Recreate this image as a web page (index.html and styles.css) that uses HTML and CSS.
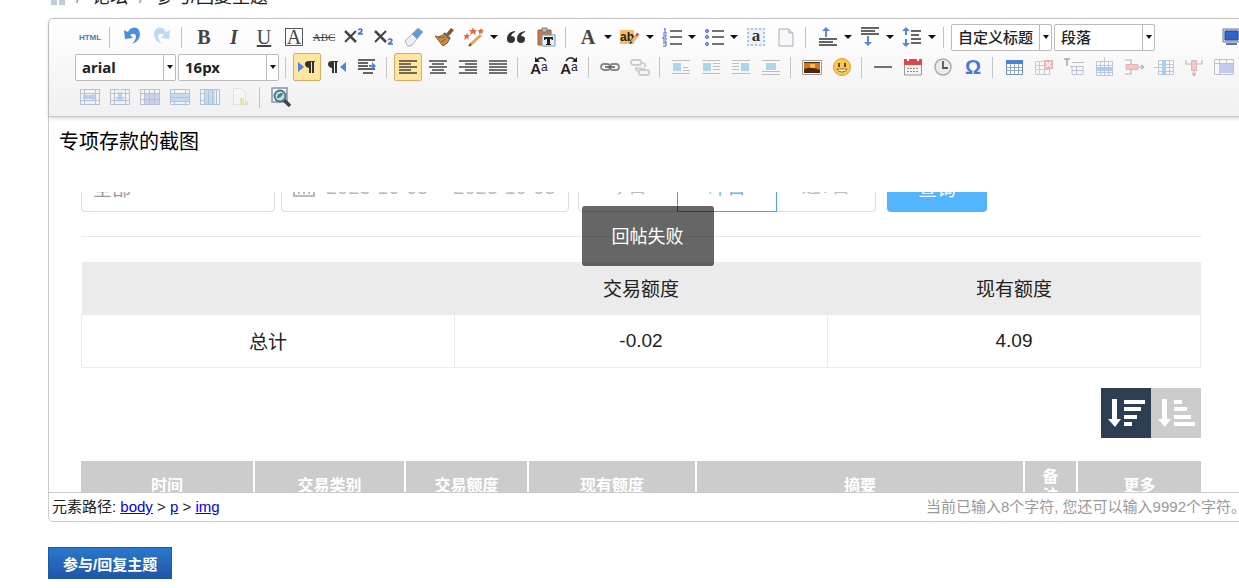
FILE: index.html
```html
<!DOCTYPE html>
<html lang="zh-CN">
<head>
<meta charset="utf-8">
<title>参与/回复主题</title>
<link rel="stylesheet" href="styles.css">
</head>
<body>
<nav class="crumbs">
  <a class="crumb-home" href="#" aria-label="首页"><svg width="14" height="16" viewBox="0 0 14 16"><path fill="#b9cfe0" d="M0 0h6v16H0zM8 0h6v16H8z"/></svg></a>
  <span class="crumb-slash">/</span><a href="#">论坛</a><span class="crumb-slash">/</span><span>参与/回复主题</span>
</nav>
<main class="editor">
  <div class="toolbar">
    <div class="tools">
      <button class="tool" aria-label="HTML"><span class="html-mark">HTML</span></button>
      <i class="sep"></i>
      <button class="tool" aria-label="撤销"><svg viewBox="0 0 20 20"><path fill="#4b8fe0" d="M2 3l1 9 8-1-3-3q5-3 6 1 0 4-4 8 8-3 8-10-1-8-8-6-3 1-4 4z"/></svg></button>
      <button class="tool faded" aria-label="重做"><svg viewBox="0 0 20 20"><path fill="#6fb0e8" d="M18 3l-1 9-8-1 3-3q-5-3-6 1 0 4 4 8-8-3-8-10 1-8 8-6 3 1 4 4z"/></svg></button>
      <i class="sep"></i>
      <button class="tool glyph" aria-label="加粗"><b>B</b></button>
      <button class="tool glyph" aria-label="斜体"><b><em>I</em></b></button>
      <button class="tool glyph" aria-label="下划线"><u>U</u></button>
      <button class="tool glyph" aria-label="字符边框"><span class="boxed">A</span></button>
      <button class="tool glyph" aria-label="删除线"><s class="strike">ABC</s></button>
      <button class="tool" aria-label="上标"><svg viewBox="0 0 20 20"><path stroke="#444" stroke-width="2.5" d="M1 4l11 11"/><path stroke="#444" stroke-width="2" d="M12 4L1 15"/><path fill="none" stroke="#4672d8" stroke-width="1.5" d="M14 3q3-2 4 0 0 2-4 4h5"/></svg></button>
      <button class="tool" aria-label="下标"><svg viewBox="0 0 20 20"><path stroke="#444" stroke-width="2.5" d="M1 4l11 11"/><path stroke="#444" stroke-width="2" d="M12 4L1 15"/><path fill="none" stroke="#4672d8" stroke-width="1.5" d="M14 13q3-2 4 0 0 2-4 4h5"/></svg></button>
      <button class="tool" aria-label="清除格式"><svg viewBox="0 0 20 20"><path fill="#5b9be0" stroke="#a3b3c6" d="M8 7l6-6 5 4-6 7z"/><path fill="#eef1f5" stroke="#a3b3c6" d="M1 14l7-7 5 5-6 7H4z"/></svg></button>
      <button class="tool" aria-label="格式刷"><svg viewBox="0 0 20 20"><path fill="#8a5226" d="M12 7l5-6 3 2-5 6z"/><path fill="#c98b45" stroke="#8b5a2b" d="M1 9q5 2 10-3l5 5q-2 6-7 8z"/><path stroke="#8b5a2b" d="M4 11l7-1M7 15l5-3"/><path stroke="#666" stroke-width="2" d="M10 6l6 6"/></svg></button>
      <button class="tool split" aria-label="自动排版"><svg viewBox="0 0 20 20"><path stroke="#e0a458" stroke-width="3" d="M6 18L17 8"/><path stroke="#7b4a22" stroke-width="2" d="M5 19l2-2"/><path fill="#f0603c" d="M9 0l1 3 3 0-2 2 1 3-3-2-3 2 1-3-2-2h3zM3 6l1 2h2l-2 2 1 3-2-2-3 2 1-3-1-2h2zM17 1l1 2 2 0-2 2 1 2-2-1-2 1 0-2-1-2h2z"/></svg><i class="caret"></i></button>
      <button class="tool" aria-label="引用"><svg viewBox="0 0 20 20"><path fill="#333" d="M9 4q-8 1-8 8 0 4 4 4 4 0 4-4 0-3-4-3 1-3 4-4zM19 4q-8 1-8 8 0 4 4 4 4 0 4-4 0-3-4-3 1-3 4-4z"/></svg></button>
      <button class="tool" aria-label="纯文本粘贴"><svg viewBox="0 0 20 20"><path fill="#c47a40" stroke="#9b6036" d="M2 3h13v15H2z"/><path fill="#bbb" stroke="#777" d="M6 1h5v4H6z"/><path fill="#e9f1fb" stroke="#6f95c2" d="M6 8h13v11H6z"/><path fill="#222" d="M8 10h9v3h-1l-1-1h-1v5h1v1h-5v-1h1v-5h-1l-1 1H8z"/></svg></button>
      <i class="sep"></i>
      <button class="tool split glyph" aria-label="字体颜色"><span class="letter">A</span><i class="caret"></i></button>
      <button class="tool split" aria-label="背景色"><span class="marker">ab<svg class="pencil" viewBox="0 0 12 14"><path stroke="#d9503c" stroke-width="3" d="M4 10l6-8"/><path stroke="#e8b45c" stroke-width="3" d="M3 11l5-6"/><path stroke="#444" stroke-width="2" d="M1 13l2-2"/></svg></span><i class="caret"></i></button>
      <button class="tool split" aria-label="有序列表"><svg viewBox="0 0 20 20"><path stroke="#444" stroke-width="1.5" d="M8 4h12M8 10h12M8 17h12"/><path fill="none" stroke="#3f68e0" d="M3 1v5M2 2h1M1 6h4M1 8h3v2H1v2h4M1 14h3v5H1M1 16h3"/></svg><i class="caret"></i></button>
      <button class="tool split" aria-label="无序列表"><svg viewBox="0 0 20 20"><path stroke="#444" stroke-width="1.5" d="M8 4h12M8 10h12M8 17h12"/><g fill="#9db5ff" stroke="#4262e8"><circle cx="3" cy="4" r="1.5"/><circle cx="3" cy="10" r="1.5"/><circle cx="3" cy="17" r="1.5"/></g></svg><i class="caret"></i></button>
      <button class="tool" aria-label="全选"><span class="pick">a</span></button>
      <button class="tool" aria-label="清空文档"><svg viewBox="0 0 20 20"><path fill="#f7f8fa" stroke="#a8adb5" d="M3 2h10l4 4v13H3z"/><path fill="#dde1e6" stroke="#a8adb5" d="M13 2v4h4"/></svg></button>
      <i class="sep"></i>
      <button class="tool split" aria-label="段前距"><svg viewBox="0 0 20 20"><path stroke="#333" stroke-width="1.5" d="M1 12h18M1 15h14M1 18h18"/><path fill="#5b86d4" d="M8 0l4 4H9v6H7V4H4z"/></svg><i class="caret"></i></button>
      <button class="tool split" aria-label="段后距"><svg viewBox="0 0 20 20"><path stroke="#333" stroke-width="1.5" d="M1 1h18M1 4h14M1 7h18"/><path fill="#5b86d4" d="M8 19l4-4H9V9H7v6H4z"/></svg><i class="caret"></i></button>
      <button class="tool split" aria-label="行间距"><svg viewBox="0 0 20 20"><path stroke="#333" stroke-width="1.5" d="M9 4h10M9 8h8M9 12h10M9 16h10"/><path fill="#5b86d4" d="M4 0l4 4H5v4H3V4H0zM4 20l4-4H5v-4H3v4H0z"/></svg><i class="caret"></i></button>
      <i class="sep"></i>
      <span class="combo combo-cn"><select aria-label="自定义标题"><option>自定义标题</option></select><i class="combo-arrow"></i></span>
      <span class="combo combo-cn"><select aria-label="段落格式"><option>段落</option></select><i class="combo-arrow"></i></span>
      <button class="tool fullscreen" aria-label="全屏"><svg viewBox="0 0 20 20"><path fill="#d9e0ea" stroke="#667b9e" d="M2 2h17v13H2z"/><path fill="#3563c8" stroke="#254489" d="M4 4h13v9H4z"/><path fill="#68778e" d="M5 16h11v2H5z"/></svg></button>
    </div>
    <div class="tools tools-tight">
      <span class="combo"><select aria-label="字体"><option>arial</option></select><i class="combo-arrow"></i></span>
      <span class="combo"><select aria-label="字号"><option>16px</option></select><i class="combo-arrow"></i></span>
      <i class="sep"></i>
      <button class="tool on" aria-label="从左向右"><svg viewBox="0 0 20 20"><path fill="#4f86e0" d="M1 5l6 5-6 5z"/><path fill="#333" d="M18 4v1h-1v11h-2V5h-1v11h-2v-5q-4-1-4-4t4-3z"/></svg></button>
      <button class="tool" aria-label="从右向左"><svg viewBox="0 0 20 20"><path fill="#4f86e0" d="M19 5l-6 5 6 5z"/><path fill="#333" d="M11 4v1h-1v11H8V5H7v11H5v-5Q1 10 1 7t4-3z"/></svg></button>
      <button class="tool" aria-label="首行缩进"><svg viewBox="0 0 20 20"><path stroke="#333" stroke-width="1.5" d="M1 3h17M1 6h10M1 9h10M1 12h17M6 16h10"/><path fill="#4f86e0" d="M12 8h3V5l4 4-4 4v-3h-3z"/></svg></button>
      <i class="sep"></i>
      <button class="tool on" aria-label="左对齐"><svg viewBox="0 0 20 20"><path stroke="#444" stroke-width="1.3" d="M1 4h18M1 7h12M1 10h18M1 13h12M1 16h18"/></svg></button>
      <button class="tool" aria-label="居中"><svg viewBox="0 0 20 20"><path stroke="#444" stroke-width="1.3" d="M1 4h18M4 7h12M1 10h18M4 13h12M2 16h16"/></svg></button>
      <button class="tool" aria-label="右对齐"><svg viewBox="0 0 20 20"><path stroke="#444" stroke-width="1.3" d="M1 4h18M7 7h12M1 10h18M7 13h12M1 16h18"/></svg></button>
      <button class="tool" aria-label="两端对齐"><svg viewBox="0 0 20 20"><path stroke="#444" stroke-width="1.3" d="M1 4h18M1 7h18M1 10h18M1 13h18M1 16h18"/></svg></button>
      <i class="sep"></i>
      <button class="tool" aria-label="字母大写"><span class="case">A<small>a</small><svg class="case-turn" viewBox="0 0 14 6"><path fill="none" stroke="#222" stroke-width="1.5" d="M12 5Q8-1 3 4"/><path fill="#222" d="M1 1v5h5z"/></svg></span></button>
      <button class="tool" aria-label="字母小写"><span class="case">A<small>a</small><svg class="case-turn" viewBox="0 0 14 6"><path fill="none" stroke="#222" stroke-width="1.5" d="M2 5q4-6 9-1"/><path fill="#222" d="M13 1v5H8z"/></svg></span></button>
      <i class="sep"></i>
      <button class="tool" aria-label="超链接"><svg viewBox="0 0 20 20"><g fill="none" stroke="#888" stroke-width="1.8"><rect x="1" y="7" width="9" height="6" rx="3"/><rect x="10" y="7" width="9" height="6" rx="3"/></g><path stroke="#555" stroke-width="1.5" d="M5 10h10"/></svg></button>
      <button class="tool faded" aria-label="取消链接"><svg viewBox="0 0 20 20"><g fill="none" stroke="#999" stroke-width="1.8"><rect x="1" y="3" width="10" height="5" rx="2"/><rect x="9" y="13" width="10" height="5" rx="2"/><path d="M11 5l4 2v3M9 15l-3-2v-2l9 1"/></g></svg></button>
      <i class="sep"></i>
      <button class="tool faded" aria-label="默认"><svg viewBox="0 0 20 20"><path fill="#4bb0e0" d="M2 6h8v8H2z"/><path stroke="#777" d="M1 3.500h18M12 13.500h7M12 10.500h5M1 16.500h18"/></svg></button>
      <button class="tool faded" aria-label="左浮动"><svg viewBox="0 0 20 20"><path fill="#4bb0e0" d="M2 6h8v8H2z"/><path stroke="#777" d="M1 3.500h18M12 6.500h7M12 9.500h7M12 12.500h7M1 16.500h18"/></svg></button>
      <button class="tool faded" aria-label="右浮动"><svg viewBox="0 0 20 20"><path fill="#4bb0e0" d="M10 6h8v8h-8z"/><path stroke="#777" d="M1 3.500h18M1 6.500h7M1 9.500h7M1 12.500h7M1 16.500h18"/></svg></button>
      <button class="tool faded" aria-label="图片居中"><svg viewBox="0 0 20 20"><path fill="#4bb0e0" d="M5 6h10v7H5z"/><path stroke="#777" d="M1 3.500h18M1 14.500h18M1 17.500h18"/></svg></button>
      <i class="sep"></i>
      <button class="tool" aria-label="图片"><svg viewBox="0 0 20 20"><path fill="#fff" stroke="#9a9a9a" d="M.5 3.500h19v14H.5z"/><path fill="#d9741c" d="M2 5h16v11H2z"/><path fill="#f7c148" d="M8 7h5v5H8z"/><path fill="#50260e" d="M2 12q8-3 16 1v3H2zM2 5h16v1H2z"/></svg></button>
      <button class="tool" aria-label="表情"><svg viewBox="0 0 20 20"><circle cx="10" cy="10" r="8.500" fill="#fbc84c" stroke="#e09a36"/><path fill="#6b4520" d="M6 6h2v4H6zM12 6h2v4h-2z"/><path fill="#fff" stroke="#a4652a" d="M5 12h10q-1 3-5 3t-5-3z"/></svg></button>
      <i class="sep"></i>
      <button class="tool" aria-label="分隔线"><svg viewBox="0 0 20 20"><path stroke="#444" stroke-width="1.500" d="M1 10h18"/></svg></button>
      <button class="tool" aria-label="日期"><svg viewBox="0 0 20 20"><path fill="#f4f4f4" stroke="#999" d="M1.500 4h17v14h-17z"/><path fill="#e04848" d="M1 2h18v6H1z"/><path stroke="#fff" stroke-width="2" d="M5 0v4M15 0v4"/><path stroke="#8d8d8d" stroke-dasharray="2 1" d="M4 11.500h12M4 14.500h12"/></svg></button>
      <button class="tool" aria-label="时间"><svg viewBox="0 0 20 20"><circle cx="10" cy="10" r="8" fill="#e9edf0" stroke="#aaa" stroke-width="1.500"/><path fill="none" stroke="#555" stroke-width="1.800" d="M10 4v7h5"/></svg></button>
      <button class="tool" aria-label="特殊字符"><span class="omega">Ω</span></button>
      <i class="sep"></i>
      <button class="tool" aria-label="插入表格"><svg viewBox="0 0 20 20"><path fill="#fff" stroke="#668bc2" d="M2.500 3.500h16v14h-16z"/><path fill="#4b82df" d="M2 3h17v4H2z"/><path stroke="#93aacb" d="M2 10.500h16M2 13.500h16M6.500 7v11M10.500 7v11M14.500 7v11"/></svg></button>
      <button class="tool faded" aria-label="删除表格"><svg viewBox="0 0 20 20"><path fill="none" stroke="#8b99ae" d="M1.500 4.500h14v13h-14zM1 8.500h14M1 12.500h14M5.500 5v12M10.500 5v12"/><path fill="#e86060" d="M10 3h9v9h-9z"/><path stroke="#fff" stroke-width="1.500" d="M12 5l5 5M17 5l-5 5"/></svg></button>
      <button class="tool faded" aria-label="表格前插入行"><svg viewBox="0 0 20 20"><path fill="none" stroke="#444" stroke-width="1.500" d="M0 2h6M3 2v7"/><path fill="none" stroke="#7186a8" d="M8 5.500h12M6 9.500h13v8H8v-8M8 13.500h11M12.500 9v8"/></svg></button>
      <button class="tool faded" aria-label="插入行"><svg viewBox="0 0 20 20"><path fill="none" stroke="#7a90b0" d="M2.500 4.500h16v14h-16zM2 8.500h16M2 15.500h16M6.500 4v14M10.500 0v18M14.500 4v14"/><path fill="#4a9aee" d="M2 10h17v4H2z"/></svg></button>
      <button class="tool faded" aria-label="删除行"><svg viewBox="0 0 20 20"><path fill="none" stroke="#666" stroke-width="1.200" d="M1 3h6v4M1 17h6v-4M14 10h6M17 8l3 2-3 2"/><path fill="#f08b8b" stroke="#cf6060" d="M2 7.500h12v5H2z"/></svg></button>
      <button class="tool faded" aria-label="插入列"><svg viewBox="0 0 20 20"><path fill="none" stroke="#7a90b0" d="M4.500 3.500h15v14h-15zM4 7.500h15M0 10.500h19M4 14.500h15M15.500 4v14"/><path fill="#4a9aee" d="M8 3h4v15H8z"/></svg></button>
      <button class="tool faded" aria-label="删除列"><svg viewBox="0 0 20 20"><path fill="none" stroke="#777" stroke-width="1.200" d="M2 3v4h5M18 3v4h-5M10 13v6M8 16l2 3 2-3"/><path fill="#f08b8b" stroke="#cf6060" d="M7.500 3.500h5v10h-5z"/></svg></button>
      <button class="tool faded" aria-label="合并单元格"><svg viewBox="0 0 20 20"><path fill="none" stroke="#71819a" d="M.5 2.500h19v15H.5zM0 6.500h19M5.500 3v15M12.500 3v4"/><path fill="#8197e6" d="M5 7h14v9H5z"/></svg></button>
    </div>
    <div class="tools tools-tight">
      <button class="tool faded" aria-label="向右合并"><svg viewBox="0 0 20 20"><path fill="none" stroke="#6c88ae" d="M.5 2.500h19v15H.5zM0 6.500h19M0 13.500h19M4.500 3v15M15.500 3v15"/><path fill="#6ba5e0" d="M3 8h9V6l5 4-5 4v-2H3z"/></svg></button>
      <button class="tool faded" aria-label="向下合并"><svg viewBox="0 0 20 20"><path fill="none" stroke="#6c88ae" d="M.5 2.500h19v15H.5zM0 6.500h19M0 13.500h19M4.500 3v15M15.500 3v15"/><path fill="#6ba5e0" d="M8 5h4v5h3l-5 5-5-5h3z"/></svg></button>
      <button class="tool faded" aria-label="拆分单元格"><svg viewBox="0 0 20 20"><path fill="#9ba8ea" d="M5 7h14v10H5z"/><path fill="none" stroke="#6c88ae" d="M.5 2.500h19v15H.5zM0 6.500h19M0 12.500h19M4.500 3v15M9.500 3v15M14.500 3v15"/></svg></button>
      <button class="tool faded" aria-label="拆分行"><svg viewBox="0 0 20 20"><path fill="#8abcf0" d="M1 6h18v9H1z"/><path fill="none" stroke="#5c88bd" d="M.5 2.500h19v15H.5zM0 6.500h19M0 10.500h19M0 14.500h19M4.500 3v4M15.500 3v4M4.500 14v4M15.500 14v4"/></svg></button>
      <button class="tool faded" aria-label="拆分列"><svg viewBox="0 0 20 20"><path fill="#8abcf0" d="M5 3h10v14H5z"/><path fill="none" stroke="#5c88bd" d="M.5 2.500h19v15H.5zM4.500 3v15M8.500 3v15M12.500 3v15M16.500 3v15M0 6.500h4M0 13.500h4"/></svg></button>
      <button class="tool faded" aria-label="图表"><svg viewBox="0 0 20 20"><path fill="#fafafa" stroke="#ccc" d="M3.500 1.500h8l4 4v12h-12z"/><path fill="#d7d06a" d="M10 11h4v7h-4zM15 14h3v4h-3z"/></svg></button>
      <i class="sep"></i>
      <button class="tool" aria-label="查询替换"><svg viewBox="0 0 20 20"><path fill="#eef3f8" stroke="#7f97b3" stroke-width="1.500" d="M1 1h15v14H1z"/><path stroke="#444" stroke-width="3.500" d="M13 13l6 6"/><circle cx="9" cy="9" r="5.500" fill="#bfe0e0" stroke="#5b6a78" stroke-width="1.800"/><path fill="#3f827a" d="M6 11q0-5 6-5-1 5-6 5z"/></svg></button>
    </div>
  </div>
  <div class="canvas">
    <p class="para">专项存款的截图</p>
    <section class="shot">
      <div class="filters">
        <div class="field field-kind">全部</div>
        <div class="field field-dates"><svg class="cal" viewBox="0 0 22 20"><path fill="none" stroke="#bbb" stroke-width="2" d="M1 3h20v16H1zM1 8h20M6 11v6M11 11v6M16 11v6M3 14h16"/></svg><span>2023-10-05</span><span>2023-10-05</span></div>
        <div class="days"><span class="day">今日</span><span class="day day-on">昨日</span><span class="day">近7日</span></div>
        <div class="query">查询</div>
      </div>
      <hr class="rule">
      <table class="totals">
        <thead><tr><th></th><th>交易额度</th><th>现有额度</th></tr></thead>
        <tbody><tr><td>总计</td><td>-0.02</td><td>4.09</td></tr></tbody>
      </table>
      <div class="sorts">
        <button class="sort sort-on" aria-label="降序"><svg viewBox="0 0 50 50"><path fill="#fff" d="M11 11h5v20h4l-6 8-7-8h4zM23 12h21v4H23zM23 19h17v4H23zM23 27h13v4H23zM23 34h8v4h-8z"/></svg></button>
        <button class="sort" aria-label="升序"><svg viewBox="0 0 50 50"><path fill="#fff" d="M11 11h5v20h4l-6 8-7-8h4zM23 12h8v4h-8zM23 19h13v4H23zM23 27h17v4H23zM23 34h21v4H23z"/></svg></button>
      </div>
      <table class="records">
        <colgroup><col class="c-time"><col class="c-type"><col class="c-amount"><col class="c-balance"><col><col class="c-note"><col class="c-more"></colgroup>
        <thead><tr><th>时间</th><th>交易类别</th><th>交易额度</th><th>现有额度</th><th>摘要</th><th>备<br>注</th><th>更多</th></tr></thead>
      </table>
    </section>
  </div>
  <footer class="status">
    <div>元素路径: <a href="#">body</a> &gt; <a href="#">p</a> &gt; <a href="#">img</a></div>
    <div class="count">当前已输入8个字符, 您还可以输入9992个字符。</div>
  </footer>
  <div class="toast" role="status">回帖失败</div>
</main>
<button class="submit">参与/回复主题</button>
</body>
</html>
```
FILE: styles.css
```css
* { box-sizing: border-box; }
body {
  margin: 0;
  padding-left: 48px;
  overflow: hidden;
  background: #fff;
  color: #222;
  font-family: "Liberation Sans", "Noto Sans CJK SC", sans-serif;
}
button { font-family: inherit; cursor: pointer; }

.crumbs {
  display: flex;
  align-items: flex-end;
  gap: 11px;
  height: 9px;
  margin-bottom: 9px;
  padding-left: 3px;
  overflow: hidden;
  font-size: 18px;
  line-height: 24px;
  white-space: nowrap;
}
.crumbs a { color: inherit; text-decoration: none; }
.crumb-home svg { display: block; margin-bottom: 4px; }
.crumb-slash { color: #999; }

.editor {
  position: relative;
  margin-right: -8px;
  border: 1px solid #ccc;
  border-radius: 5px;
}
.toolbar {
  padding: 3px 0 4px 26px;
  border-bottom: 1px solid #c8c8c8;
  border-radius: 5px 5px 0 0;
  background: linear-gradient(#fff, #f0f0f0);
  box-shadow: 0 1px 4px rgba(0, 0, 0, .2);
  overflow: hidden;
}
.tools { display: flex; align-items: center; height: 30px; }
.tools > * { flex: none; }
.sep { width: 1px; height: 21px; margin: 0 7px 0 4px; background: #c4c4c4; }
.tools-tight .sep { margin-right: 6px; }
.tool {
  display: flex;
  align-items: center;
  justify-content: center;
  width: 28px;
  height: 28px;
  margin: 0 1px;
  padding: 0;
  border: 1px solid transparent;
  border-radius: 2px;
  background: none;
}
.tool > svg { width: 20px; height: 20px; }
.tool.on { border-color: #dcac6c; background: #ffe69f; }
.faded > svg { opacity: .45; }
.split { justify-content: flex-start; width: 40px; padding-left: 3px; gap: 6px; }
.caret {
  border: 4px solid transparent;
  border-top-color: #111;
  border-bottom-width: 0;
}
.fullscreen { margin-left: 60px; }
.html-mark { color: #3f7fb8; font: bold 8px "Liberation Sans", sans-serif; }
.glyph { color: #444; font: 20px "Liberation Serif", serif; }
.boxed {
  width: 18px;
  height: 18px;
  border: 1px solid #555;
  line-height: 17px;
}
.strike { font-size: 11px; }
.letter { width: 20px; text-align: center; font-weight: bold; }
.marker {
  position: relative;
  width: 20px;
  background: linear-gradient(90deg, #f7bd5c 14px, transparent 14px);
  color: #222;
  font: bold 12px/14px "Liberation Sans", sans-serif;
  text-align: left;
}
.pencil { position: absolute; right: 0; top: 1px; width: 11px; height: 14px; }
.pick {
  width: 18px;
  height: 18px;
  border: 2px dotted #a9c4ee;
  background: #eaf2fd;
  color: #333;
  font: bold 17px/11px "Liberation Serif", serif;
}
.case { position: relative; padding-top: 3px; color: #222; font: bold 15px/15px "Liberation Sans", sans-serif; }
.case small { font-size: 12px; font-weight: 400; vertical-align: 3px; line-height: 10px; }
.case-turn { position: absolute; left: 4px; top: -2px; width: 14px; height: 6px; }
.omega { color: #4678dc; font: bold 20px "Liberation Sans", sans-serif; }

.combo { position: relative; width: 101px; height: 27px; margin-right: 2px; }
.combo select {
  width: 100%;
  height: 100%;
  padding: 0 14px 0 6px;
  border: 1px solid #bbb;
  border-radius: 2px;
  background: #fff;
  color: #222;
  font: bold 15px "Noto Sans", "Noto Sans CJK SC", sans-serif;
  appearance: none;
}
.combo-cn select { font-weight: 500; }
.combo-arrow {
  position: absolute;
  top: 1px;
  right: 1px;
  bottom: 1px;
  display: grid;
  place-items: center;
  width: 12px;
  border-left: 1px solid #bbb;
  pointer-events: none;
}
.combo-arrow::after {
  content: "";
  border: 3px solid transparent;
  border-top: 4px solid #111;
  border-bottom: 0;
}

.canvas { height: 375px; padding: 9px 45px 0 10px; overflow: hidden; }
.para { margin: 0; color: #000; font-size: 20px; line-height: 32px; }
.shot { margin: 34px 0 0 22px; font-size: 19px; }
.filters { display: flex; align-items: flex-end; height: 20px; overflow: hidden; color: #bbb; }
.field, .days, .query { display: flex; align-items: center; height: 50px; }
.field { border: 1px solid #ddd; border-radius: 4px; padding: 0 11px; white-space: nowrap; }
.field-kind { width: 194px; margin-right: 6px; color: #999; }
.field-dates { width: 288px; margin-right: 9px; gap: 25px; font-size: 20px; }
.cal { width: 22px; height: 20px; margin-right: -14px; }
.days { width: 298px; margin-right: 11px; border: 1px solid #ddd; border-radius: 4px; }
.day { flex: 1; height: 50px; line-height: 50px; text-align: center; }
.day-on { border: 1px solid #4aa5d8; color: #6bb9e2; }
.query { justify-content: center; width: 100px; border-radius: 4px; background: #53b5ff; color: #fff; }
.rule { height: 1px; margin: 24px 0 25px; border: 0; background: #e8e8e8; }
table { width: 100%; table-layout: fixed; border-collapse: collapse; }
th, td { padding: 0; text-align: center; }
.totals th { height: 52px; background: #ebebeb; font-weight: 400; }
.totals td { height: 53px; border: 1px solid #ebebeb; }
.sorts { display: flex; justify-content: flex-end; margin: 20px 0 23px; }
.sort { width: 50px; height: 50px; padding: 0; border: 0; background: #ccc; }
.sort svg { display: block; }
.sort-on { background: #2d3d52; }
.records th {
  height: 50px;
  border-left: 2px solid #fff;
  background: #ccc;
  color: #fff;
  font-size: 16px;
  line-height: 19px;
}
.records th:first-child { border-left: 0; }
.c-time { width: 173px; }
.c-type { width: 151px; }
.c-amount { width: 123px; }
.c-balance { width: 168px; }
.c-note { width: 53px; }
.c-more { width: 124px; }

.status {
  display: flex;
  justify-content: space-between;
  border-top: 1px solid #ccc;
  padding-left: 3px;
  font-size: 15px;
  line-height: 28px;
  white-space: nowrap;
}
.status a { color: #00e; }
.count { color: #999; }
.toast {
  position: absolute;
  top: 187px;
  left: 50%;
  transform: translateX(-50%);
  padding: 2px 30px 0;
  border-radius: 3px;
  background: rgba(0, 0, 0, .6);
  color: #fff;
  font-size: 18px;
  line-height: 58px;
}
.submit {
  display: block;
  margin-top: 25px;
  height: 32px;
  padding: 0 14px;
  border: 1px solid #1f5aa8;
  background: linear-gradient(#2b78cc, #2056a6);
  color: #fff;
  font-size: 15px;
  font-weight: bold;
}
```
